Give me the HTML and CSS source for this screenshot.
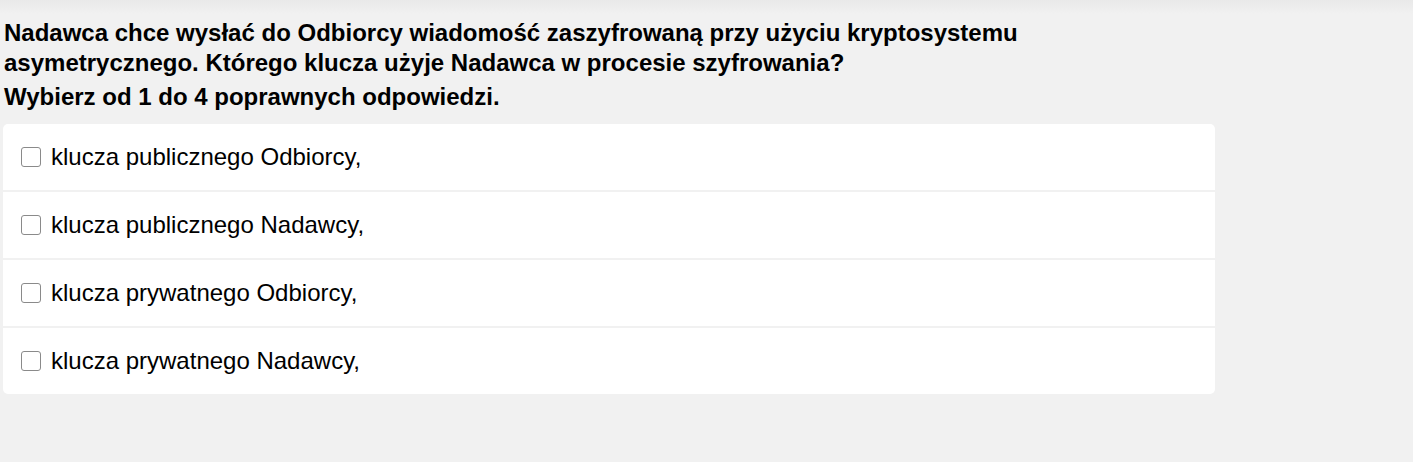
FILE: index.html
```html
<!DOCTYPE html>
<html lang="pl">
<head>
<meta charset="utf-8">
<title>Pytanie</title>
<link rel="stylesheet" href="styles.css">
</head>
<body>
<main class="quiz">
  <div class="question">
    <p class="question-text">Nadawca chce wysłać do Odbiorcy wiadomość zaszyfrowaną przy użyciu kryptosystemu asymetrycznego. Którego klucza użyje Nadawca w procesie szyfrowania?</p>
    <p class="question-hint">Wybierz od 1 do 4 poprawnych odpowiedzi.</p>
  </div>
  <ul class="answers">
    <li class="answer"><label class="answer-label"><input type="checkbox" class="box"><span>klucza publicznego Odbiorcy,</span></label></li>
    <li class="answer"><label class="answer-label"><input type="checkbox" class="box"><span>klucza publicznego Nadawcy,</span></label></li>
    <li class="answer"><label class="answer-label"><input type="checkbox" class="box"><span>klucza prywatnego Odbiorcy,</span></label></li>
    <li class="answer"><label class="answer-label"><input type="checkbox" class="box"><span>klucza prywatnego Nadawcy,</span></label></li>
  </ul>
</main>
</body>
</html>
```
FILE: styles.css
```css
html, body {
  margin: 0;
  padding: 0;
  height: 100%;
}
body {
  background: linear-gradient(to bottom, #e9e9e9 0px, #f1f1f1 14px, #f1f1f1 100%);
  font-family: "Liberation Sans", Arial, sans-serif;
  color: #000;
}
.quiz {
  width: 1212px;
  padding: 18px 0 0 3px;
}
.question {
  padding-left: 1px;
  max-width: 1100px;
}
.question-text {
  margin: 0;
  font-size: 24px;
  font-weight: bold;
  line-height: 30px;
}
.question-hint {
  margin: 4px 0 0;
  font-size: 24px;
  font-weight: bold;
  line-height: 30px;
}
.answers {
  list-style: none;
  margin: 12px 0 0;
  padding: 0;
  display: flex;
  flex-direction: column;
  gap: 2px;
}
.answer {
  background: #fff;
  height: 66px;
  display: flex;
  align-items: center;
  padding-left: 18px;
}
.answer:first-child {
  border-radius: 5px 5px 0 0;
}
.answer:last-child {
  border-radius: 0 0 5px 5px;
}
.answer-label {
  display: flex;
  align-items: center;
  gap: 10px;
  font-size: 24px;
  line-height: 28px;
}
.box {
  appearance: none;
  -webkit-appearance: none;
  margin: 0;
  width: 20px;
  height: 20px;
  border: 1px solid #8a8a8a;
  border-radius: 3px;
  background: #fff;
  box-sizing: border-box;
}
```
